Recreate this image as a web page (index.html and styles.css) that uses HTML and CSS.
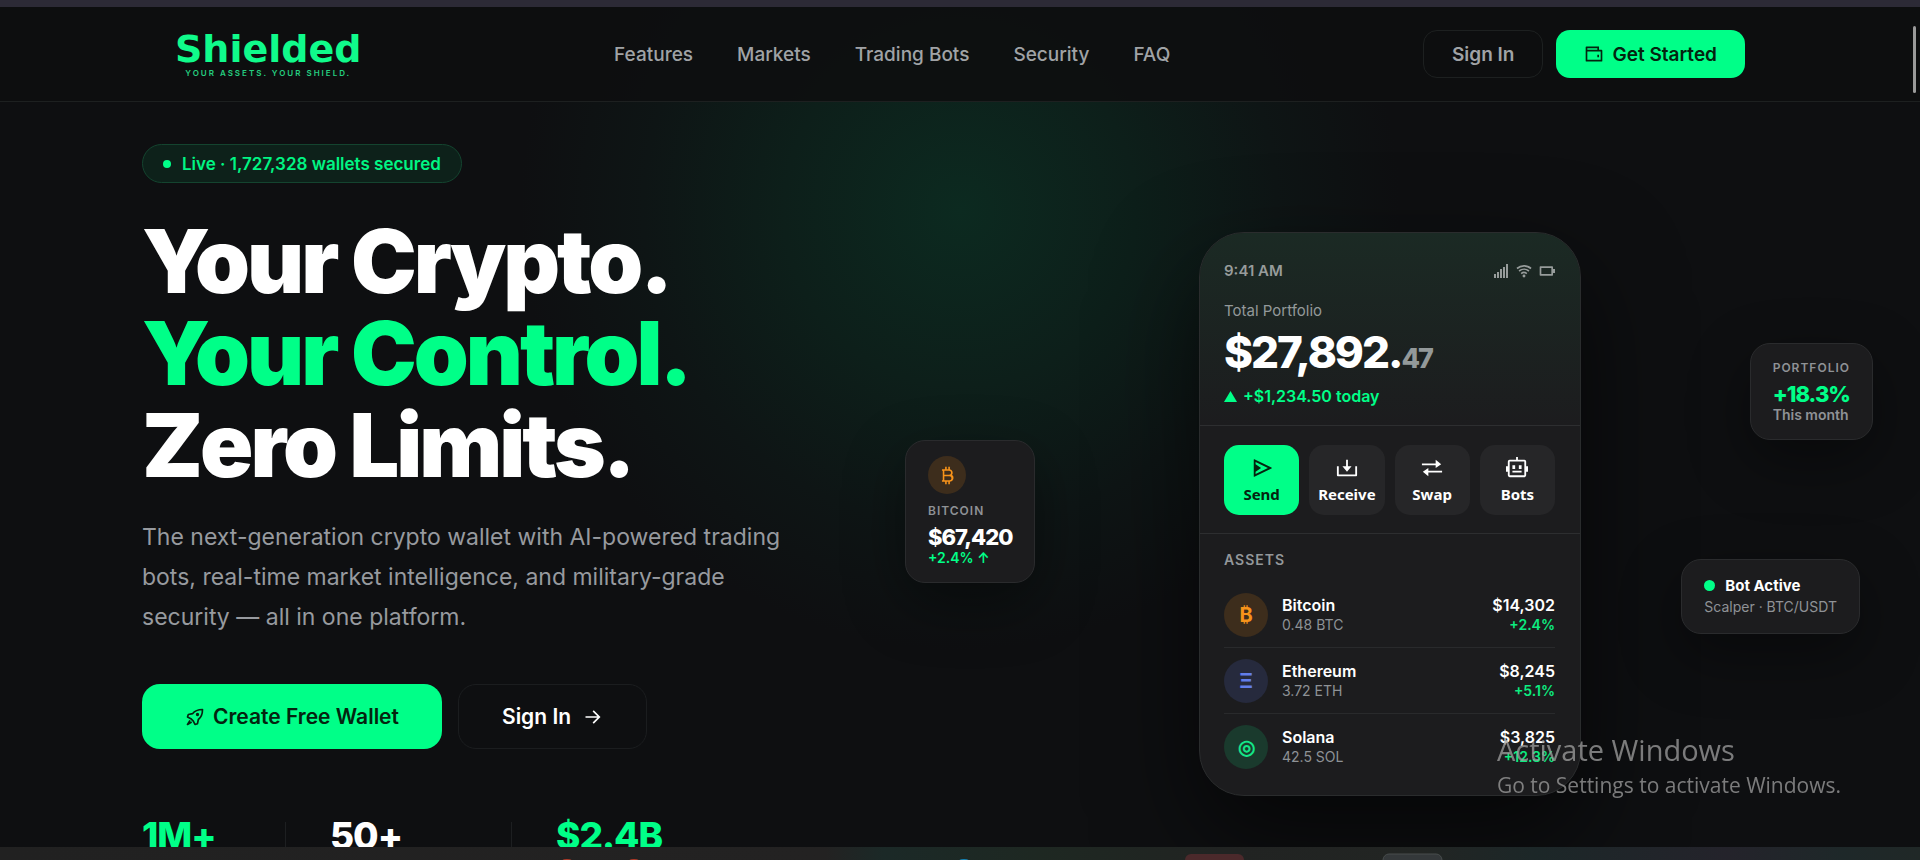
FILE: index.html
```html
<!doctype html>
<html lang="en">

	<head>
		<meta charset="utf-8">
		<title>Shielded - Your Assets. Your Shield.</title>
		<meta name="viewport" content="width=device-width, initial-scale=1.0">
		<link rel="stylesheet" href="styles.css">
	</head>

	<body>

		<div class="top-strip"></div>

		<header class="site-header">

			<a href="#" class="logo">
				<span class="logo-name">Shielded</span>
				<span class="logo-tag">YOUR ASSETS. YOUR SHIELD.</span>
			</a>

			<nav class="main-nav">
				<a href="#features">Features</a>
				<a href="#markets">Markets</a>
				<a href="#bots">Trading Bots</a>
				<a href="#security">Security</a>
				<a href="#faq">FAQ</a>
			</nav>

			<div class="header-actions">
				<button class="btn btn-ghost">Sign In</button>
				<button class="btn btn-green">
					<svg class="icon" viewBox="0 0 24 24"><path d="M18 7h3a1 1 0 0 1 1 1v12a1 1 0 0 1-1 1H3a1 1 0 0 1-1-1V4a1 1 0 0 1 1-1h15v4zM4 9v10h16V9H4zm0-4v2h12V5H4zm12 8h2v3h-2v-3z"/></svg>
					Get Started
				</button>
			</div>

		</header>

		<main class="hero">

			<!--	Headline and call to action.	-->
			<section class="hero-text">

				<div class="live-badge"><span class="dot"></span>Live · 1,727,328 wallets secured</div>

				<h1>Your Crypto.<br><span class="green">Your Control.</span><br>Zero Limits.</h1>

				<p class="lead">The next-generation crypto wallet with AI-powered trading bots, real-time market intelligence, and military-grade security — all in one platform.</p>

				<div class="cta">
					<button class="btn btn-green btn-large">
						<svg class="icon" viewBox="0 0 24 24" fill="none" stroke="currentColor" stroke-width="2" stroke-linejoin="round"><path class="line" d="M21 3c-6 0-9 1-12 5l-5 1-1 3 4 2 3 3 2 4 3-1 1-5c4-3 5-6 5-12z"/><circle class="line" cx="15" cy="9" r="1"/><path class="line" d="M6 16l-3 5 5-3"/></svg>
						Create Free Wallet
					</button>
					<button class="btn btn-outline btn-large">
						Sign In
						<svg class="icon" viewBox="0 0 24 24"><path d="M17.200 11l-5.700-5.700 1.400-1.400L21 12l-8.100 8.100-1.400-1.400 5.700-5.700H3v-2z"/></svg>
					</button>
				</div>

				<div class="stats">
					<div class="stat green">1M+</div>
					<div class="stat">50+</div>
					<div class="stat green">$2.4B</div>
				</div>

			</section>

			<!--	The wallet preview.	-->
			<section class="hero-visual">

				<div class="phone">

					<div class="phone-top">
						<div class="status-bar">
							<span>9:41 AM</span>
							<span class="status-icons">
								<svg viewBox="0 0 16 16"><path d="M1 11h2v4H1zM4 9h2v6H4zM7 6h2v9H7zM10 4h2v11h-2zM13 1h2v14h-2z"/></svg>
								<svg viewBox="0 0 24 24"><path d="M.7 7.200A17.900 17.900 0 0 1 12 3c4.300 0 8.200 1.500 11.300 4.200l-1.500 2A15 15 0 0 0 12 5.500 15 15 0 0 0 2.200 9.200zM3.800 11a13 13 0 0 1 16.400 0l-1.500 2a10.500 10.500 0 0 0-13.400 0zM7 14.900a8 8 0 0 1 10 0l-1.500 2a5.500 5.500 0 0 0-7 0z"/><circle cx="12" cy="19.500" r="2.200"/></svg>
								<svg viewBox="0 0 24 24"><path d="M3.500 7.500v9h15v-9zM2 5h18a1 1 0 0 1 1 1v12a1 1 0 0 1-1 1H2a1 1 0 0 1-1-1V6a1 1 0 0 1 1-1zm19 4h3v6h-3z"/></svg>
							</span>
						</div>
						<div class="total-label">Total Portfolio</div>
						<div class="total">$27,892.<span class="cents">47</span></div>
						<div class="change"><svg viewBox="0 0 12 12"><path d="M6 1l6 10H0z"/></svg>+$1,234.50 today</div>
					</div>

					<div class="phone-actions">
						<button class="action active">
							<svg viewBox="0 0 24 24"><path fill-rule="evenodd" d="M3.700 2.500l18.600 9a.5.5 0 0 1 0 1l-18.600 9A.5.5 0 0 1 3 21V3a.5.5 0 0 1 .7-.5zM5 5.400V8l6 4-6 4v2.600L18.500 12z"/></svg>
							Send
						</button>
						<button class="action">
							<svg viewBox="0 0 24 24"><path d="M3 19h18v-9h2v10a1 1 0 0 1-1 1H2a1 1 0 0 1-1-1V10h2zM13 10h4l-5 6-5-6h4V3h2z"/></svg>
							Receive
						</button>
						<button class="action">
							<svg viewBox="0 0 24 24"><path d="M16 3l6 5-6 4V9H1V7h15zM8 12v3h15v2H8v4l-6-5z"/></svg>
							Swap
						</button>
						<button class="action">
							<svg viewBox="0 0 24 24"><path fill-rule="evenodd" d="M13 3h7a2 2 0 0 1 2 2v15a2 2 0 0 1-2 2H4a2 2 0 0 1-2-2V5a2 2 0 0 1 2-2h7V0h2zM4 5v15h16V5zM7 15h10v2H7zM7 9h3v4H7zM14 9h3v4h-3zM0 10h2v6H0zM22 10h2v6h-2z"/></svg>
							Bots
						</button>
					</div>

					<div class="assets">
						<h2>ASSETS</h2>
						<div class="asset">
							<span class="coin btc">₿</span>
							<div class="asset-name">Bitcoin<small>0.48 BTC</small></div>
							<div class="asset-value">$14,302<small>+2.4%</small></div>
						</div>
						<div class="asset">
							<span class="coin eth">Ξ</span>
							<div class="asset-name">Ethereum<small>3.72 ETH</small></div>
							<div class="asset-value">$8,245<small>+5.1%</small></div>
						</div>
						<div class="asset">
							<span class="coin sol">◎</span>
							<div class="asset-name">Solana<small>42.5 SOL</small></div>
							<div class="asset-value">$3,825<small>+12.3%</small></div>
						</div>
					</div>

				</div>

				<!--	Floating cards around the phone.	-->
				<div class="float-card card-btc">
					<span class="coin btc small"><svg viewBox="0 0 24 24"><path fill-rule="evenodd" d="M5 4h4V1h2v3h2V1h2v3.100a4.500 4.500 0 0 1 2.800 7A5 5 0 0 1 15 20v3h-2v-3h-2v3H9v-3H5v-2h1V6H5zM8 6v5h6a2.500 2.500 0 0 0 0-5zm0 7v5h6.500a2.500 2.500 0 0 0 0-5z"/></svg></span>
					<div class="card-label">BITCOIN</div>
					<div class="card-value">$67,420</div>
					<div class="card-note green">+2.4% ↑</div>
				</div>

				<div class="float-card card-portfolio">
					<div class="card-label">PORTFOLIO</div>
					<div class="card-value green">+18.3%</div>
					<div class="card-note">This month</div>
				</div>

				<div class="float-card card-bot">
					<div class="bot-title"><span class="dot"></span>Bot Active</div>
					<div class="bot-pair">Scalper · BTC/USDT</div>
				</div>

			</section>

		</main>

		<div class="scroll-thumb"></div>

		<div class="watermark">
			<div class="watermark-title">Activate Windows</div>
			<div>Go to Settings to activate Windows.</div>
		</div>

		<!--	Desktop taskbar at the bottom edge.	-->
		<div class="taskbar">
			<svg viewBox="0 0 1920 13" preserveAspectRatio="none">
				<ellipse cx="567" cy="14" rx="5" ry="2" fill="#b03a28"/>
				<ellipse cx="634" cy="14" rx="5" ry="2" fill="#b03a28"/>
				<ellipse cx="964" cy="14" rx="5" ry="2" fill="#1683b5"/>
				<rect x="1185" y="7" width="59" height="20" rx="6" fill="#4b292b"/>
				<rect x="1383" y="7" width="59" height="20" rx="6" fill="#34383a" stroke="#484d4d"/>
			</svg>
		</div>

	</body>

</html>
```
FILE: styles.css
```css
* {
	box-sizing: border-box;
}

html, body {
	height: 100%;
	margin: 0;
	overflow: hidden;
}

body {
	position: relative;
	background-color: #0e0f11;
	background-image: radial-gradient(circle 440px at 50% 210px, #0c2a20 0%, #0d1f1a 40%, #0e1515 72%, #0e0f11 100%);
	color: white;
	font-family: "Inter", sans-serif;
	font-size: 16px;
}

button {
	font-family: inherit;
	cursor: pointer;
}

svg {
	fill: currentColor;
}

.green {
	color: #00ff88;
}

.top-strip {
	height: 7px;
	background-color: #2c2a36;
}

/* header */

.site-header {
	display: flex;
	justify-content: space-between;
	align-items: center;
	height: 95px;
	padding: 0 175px;
	background-color: rgba(13, 14, 15, 0.9);
	border-bottom: 1px solid #1d2020;
}

.logo {
	display: flex;
	flex-direction: column;
	align-items: center;
	color: #10fb8b;
	text-decoration: none;
}

.logo-name {
	font-family: "DejaVu Sans", sans-serif;
	font-weight: bold;
	font-size: 38px;
	line-height: 38px;
}

.logo-tag {
	color: #25cf80;
	font-size: 8px;
	font-weight: 600;
	letter-spacing: 2px;
	line-height: 10px;
}

.main-nav {
	display: flex;
	gap: 44px;
}

.main-nav a {
	color: #a0a3a6;
	text-decoration: none;
	font-size: 19px;
	font-weight: 500;
}

.header-actions {
	display: flex;
	align-items: center;
	gap: 13px;
}

.btn {
	display: flex;
	align-items: center;
	justify-content: center;
	gap: 8px;
	height: 48px;
	padding: 0 28px;
	border: 0;
	border-radius: 14px;
	font-size: 19px;
	font-weight: 600;
}

.btn-ghost {
	background-color: transparent;
	border: 1px solid #1d2020;
	color: #a0a3a6;
}

.btn-green {
	background-color: #00ff88;
	color: #04240f;
}

.icon {
	width: 20px;
	height: 20px;
}

.icon .line {
	fill: none;
}

.btn-outline {
	gap: 12px;
	background-color: transparent;
	border: 1px solid #1b1d1f;
	color: white;
}

.btn-large {
	height: 65px;
	padding: 0 43px;
	border-radius: 18px;
	font-size: 21px;
}

/* hero */

.hero {
	display: grid;
	grid-template-columns: 1fr 1fr;
	gap: 84px;
	align-items: start;
	padding: 42px 142px 0;
}

.live-badge {
	display: inline-flex;
	align-items: center;
	gap: 11px;
	height: 39px;
	padding: 0 20px;
	border: 1px solid #14442f;
	border-radius: 20px;
	background-color: #0d211a;
	color: #00f583;
	font-size: 17px;
	font-weight: 600;
}

.dot {
	width: 8px;
	height: 8px;
	border-radius: 50%;
	background-color: #00ff88;
}

h1 {
	margin: 32px 0 26px;
	font-size: 88px;
	font-weight: 900;
	letter-spacing: -3px;
	line-height: 92px;
}

.lead {
	max-width: 660px;
	margin: 0 0 47px;
	color: #979a9f;
	font-size: 23px;
	line-height: 40px;
}

.cta {
	display: flex;
	gap: 16px;
}

.stats {
	display: grid;
	grid-template-columns: 143px 226px 1fr;
	margin-top: 73px;
}

.stat {
	height: 60px;
	padding-left: 44px;
	border-left: 1px solid #1d1f21;
	font-size: 37px;
	font-weight: 800;
	letter-spacing: -1px;
	line-height: 28px;
}

.stat:first-child {
	padding-left: 0;
	border-left: 0;
}

/* phone */

.hero-visual {
	position: relative;
	display: flex;
	justify-content: center;
	padding-top: 88px;
}

.phone {
	width: 382px;
	border: 1px solid #2a2c2d;
	border-radius: 45px;
	background-color: #1c1c1e;
	box-shadow: 0 40px 100px rgba(0, 0, 0, 0.6);
	overflow: hidden;
}

.phone-top {
	padding: 27px 25px 18px 24px;
	border-bottom: 1px solid #2d2e30;
	background-image: linear-gradient(#1b2a24, #1c1c1e);
}

.status-bar {
	display: flex;
	justify-content: space-between;
	align-items: center;
	color: #979c9b;
	font-size: 15px;
	font-weight: 600;
	line-height: 22px;
}

.status-icons {
	display: flex;
	gap: 7px;
}

.status-icons svg {
	width: 16px;
	height: 16px;
}

.total-label {
	margin-top: 18px;
	color: #93999a;
	font-size: 15px;
	line-height: 22px;
}

.total {
	margin-top: 4px;
	font-size: 44px;
	font-weight: 800;
	letter-spacing: -2px;
	line-height: 53px;
}

.cents {
	color: #93999a;
	font-size: 27px;
}

.change {
	display: flex;
	align-items: center;
	gap: 6px;
	color: #00ff88;
	font-size: 16px;
	font-weight: 600;
	line-height: 22px;
}

.change svg {
	width: 13px;
	height: 13px;
}

.phone-actions {
	display: grid;
	grid-template-columns: repeat(4, 1fr);
	gap: 10px;
	padding: 19px 25px 18px 24px;
	border-bottom: 1px solid #2d2e30;
}

.action {
	display: flex;
	flex-direction: column;
	align-items: center;
	gap: 4px;
	height: 70px;
	padding: 12px 0 0;
	border: 0;
	border-radius: 15px;
	background-color: #262628;
	color: white;
	font-family: "Noto Sans", sans-serif;
	font-size: 15px;
	font-weight: 700;
	line-height: 22px;
}

.action svg {
	width: 22px;
	height: 22px;
}

.action.active {
	background-color: #00ff88;
	color: #04240f;
}

.assets {
	padding: 16px 25px 15px 24px;
}

.assets h2 {
	margin: 0 0 12px;
	color: #93979a;
	font-size: 14px;
	font-weight: 600;
	letter-spacing: 1px;
	line-height: 20px;
}

.asset {
	display: flex;
	align-items: center;
	gap: 14px;
	height: 66px;
	border-bottom: 1px solid #292a2c;
	font-size: 16px;
	font-weight: 600;
	line-height: 20px;
}

.asset:last-child {
	border-bottom: 0;
}

.asset small {
	display: block;
	color: #8e9296;
	font-size: 14px;
	font-weight: 400;
}

.asset-value {
	margin-left: auto;
	text-align: right;
}

.asset-value small {
	color: #0cec80;
	font-weight: 600;
}

.coin {
	display: flex;
	align-items: center;
	justify-content: center;
	width: 44px;
	height: 44px;
	border-radius: 50%;
	font-size: 20px;
	font-weight: 700;
}

.btc {
	background-color: #3d2d1c;
	color: #f7931a;
}

.eth {
	background-color: #262a3d;
	color: #627eea;
}

.sol {
	background-color: #1a3a2d;
	color: #14e688;
}

.coin.small {
	width: 38px;
	height: 38px;
}

.coin.small svg {
	width: 19px;
	height: 19px;
}

/* floating cards */

.float-card {
	position: absolute;
	padding: 15px 22px 17px;
	border: 1px solid #2a2b2d;
	border-radius: 20px;
	background-color: #1c1c1e;
	box-shadow: 0 20px 60px rgba(0, 0, 0, 0.4);
	white-space: nowrap;
}

.card-btc {
	left: -97px;
	top: 296px;
}

.card-portfolio {
	right: -95px;
	top: 199px;
}

.card-bot {
	right: -82px;
	top: 415px;
}

.card-label {
	color: #8f9296;
	font-size: 12px;
	font-weight: 600;
	letter-spacing: 1px;
	line-height: 18px;
}

.card-btc .card-label {
	margin-top: 8px;
}

.card-value {
	font-size: 22px;
	font-weight: 800;
	letter-spacing: -1px;
	line-height: 28px;
	margin-top: 3px;
}

.card-note {
	color: #8f9296;
	font-size: 14px;
	font-weight: 600;
	line-height: 14px;
}

.card-note.green {
	color: #00ff88;
}

.card-bot {
	padding-bottom: 15px;
}

.bot-title {
	display: flex;
	align-items: center;
	gap: 10px;
	font-size: 15px;
	font-weight: 700;
	line-height: 21px;
}

.bot-title .dot {
	width: 11px;
	height: 11px;
}

.bot-pair {
	color: #8f9296;
	font-size: 14px;
	line-height: 22px;
}

/* desktop edges */

.scroll-thumb {
	position: fixed;
	top: 26px;
	right: 4px;
	width: 3px;
	height: 67px;
	border-radius: 2px;
	background-color: #9a9a9a;
}

.watermark {
	position: fixed;
	right: 79px;
	bottom: 59px;
	color: rgba(160, 160, 160, 0.75);
	font-family: "Open Sans", sans-serif;
	font-size: 21px;
	line-height: 32px;
}

.watermark-title {
	font-size: 29px;
	line-height: 38px;
}

.taskbar {
	position: fixed;
	left: 0;
	right: 0;
	bottom: 0;
	height: 13px;
	background-image: linear-gradient(90deg, #212121 0%, #232222 43%, #1b2927 46%, #1e2822 54%, #212322 64%, #222523 74%, #1c2728 80%, #24232b 90%, #1e2829 96%, #202827 100%);
}

.taskbar svg {
	display: block;
	width: 100%;
	height: 13px;
}
```
